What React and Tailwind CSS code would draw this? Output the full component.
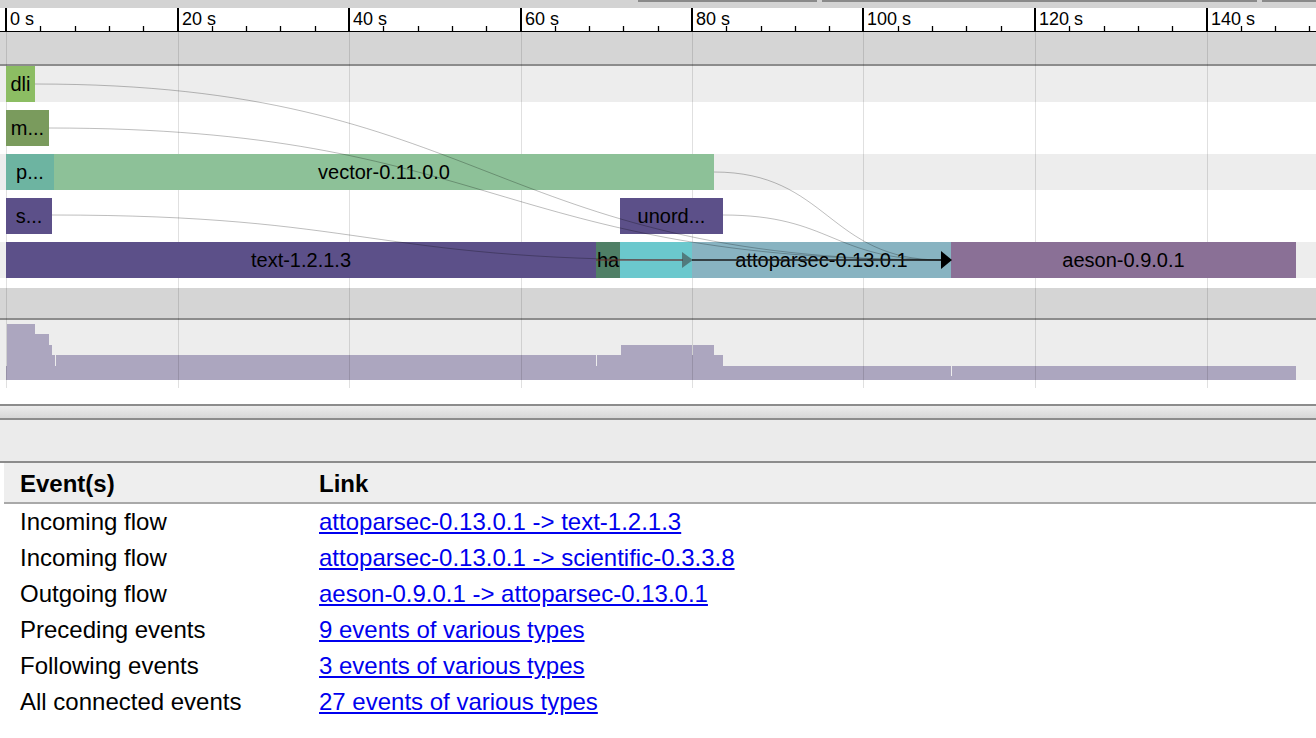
const PX_PER_S = 171.5 / 20;
const X0 = 6;

const majorTicks = [0, 20, 40, 60, 80, 100, 120, 140];

const rows = [
  { bg: true, bars: [{ from: 6, to: 35, color: 'bg-[#8cbd63]', label: 'dli' }] },
  { bg: false, bars: [{ from: 6, to: 49, color: 'bg-[#7a9b5d]', label: 'm...' }] },
  {
    bg: true,
    bars: [
      { from: 6, to: 54, color: 'bg-[#6db4a1]', label: 'p...' },
      { from: 54, to: 714, color: 'bg-[#8dc198]', label: 'vector-0.11.0.0' },
    ],
  },
  {
    bg: false,
    bars: [
      { from: 6, to: 52, color: 'bg-[#5c5089]', label: 's...' },
      { from: 620, to: 723, color: 'bg-[#5c5089]', label: 'unord...' },
    ],
  },
  {
    bg: true,
    bars: [
      { from: 6, to: 596, color: 'bg-[#5c5089]', label: 'text-1.2.1.3' },
      { from: 596, to: 620, color: 'bg-[#4f7f66]', label: 'ha' },
      { from: 620, to: 692, color: 'bg-[#6bc8cd]', label: '' },
      { from: 692, to: 951, color: 'bg-[#88b3c1]', label: 'attoparsec-0.13.0.1' },
      { from: 951, to: 1296, color: 'bg-[#8a7096]', label: 'aeson-0.9.0.1' },
    ],
  },
];

const events = [
  ['Incoming flow', 'attoparsec-0.13.0.1 -> text-1.2.1.3'],
  ['Incoming flow', 'attoparsec-0.13.0.1 -> scientific-0.3.3.8'],
  ['Outgoing flow', 'aeson-0.9.0.1 -> attoparsec-0.13.0.1'],
  ['Preceding events', '9 events of various types'],
  ['Following events', '3 events of various types'],
  ['All connected events', '27 events of various types'],
];

function Ruler() {
  const minor = [];
  for (let s = 0; s <= 152; s += 4) {
    if (s % 20 !== 0) minor.push(X0 + s * PX_PER_S);
  }
  return (
    <svg width="1316" height="24" className="block">
      <rect x="0" y="0" width="1316" height="24" fill="#ffffff" />
      <line x1="0" y1="23.5" x2="1316" y2="23.5" stroke="#000" strokeWidth="1" />
      {minor.map((x) => (
        <line key={x} x1={Math.round(x) + 0.5} y1="18" x2={Math.round(x) + 0.5} y2="24" stroke="#000" strokeWidth="1.3" />
      ))}
      {majorTicks.map((s) => {
        const x = Math.round(X0 + s * PX_PER_S);
        return (
          <g key={s}>
            <rect x={x - 1} y="0" width="2" height="24" fill="#000" />
            <text x={x + 4} y="17" fontSize="18" fill="#000" fontFamily="'Liberation Sans', Arial, sans-serif">
              {s} s
            </text>
          </g>
        );
      })}
    </svg>
  );
}

function Histogram() {
  return (
    <svg width="1316" height="60" viewBox="0 320 1316 60" className="block">
      <path
        d="M6,380 V366 H7 V324 H35 V334 H49 V345 H52 V355 H55 V366 H56 V355 H596 V366 H597 V355 H621 V345 H692 V355 H693 V345 H714 V355 H723 V366 H951 V376 H952 V366 H1296 V380 Z"
        fill="#aca6bf"
      />
    </svg>
  );
}

function Grid() {
  const grid = majorTicks.map((s) => Math.round(X0 + s * PX_PER_S) + 0.5);
  return (
    <svg width="1316" height="356" viewBox="0 32 1316 356" className="pointer-events-none absolute left-0 top-0">
      {grid.map((x) => (
        <line key={x} x1={x} y1="32" x2={x} y2="388" stroke="rgba(0,0,0,0.12)" strokeWidth="1" />
      ))}
    </svg>
  );
}

function Flows() {
  const line = 'rgba(0,0,0,0.26)';
  return (
    <svg width="1316" height="356" viewBox="0 32 1316 356" className="pointer-events-none absolute left-0 top-0">
      <path d="M35,84 C488,84 488,260 941,260" fill="none" stroke={line} />
      <path d="M49,128 C495,128 495,260 941,260" fill="none" stroke={line} />
      <path d="M52,215 C367,215 367,260 682,260" fill="none" stroke={line} />
      <path d="M714,172 C828,172 828,260 941,260" fill="none" stroke={line} />
      <path d="M723,215 C832,215 832,260 941,260" fill="none" stroke={line} />
      <line x1="596" y1="260" x2="683" y2="260" stroke="rgba(110,40,40,0.7)" strokeWidth="1.3" />
      <polygon points="682,252 693,260 682,268" fill="rgba(60,60,60,0.55)" />
      <line x1="692" y1="260" x2="942" y2="260" stroke="#1a1a1a" strokeWidth="1.4" />
      <polygon points="941,251 952,260 941,269" fill="#000" />
    </svg>
  );
}

export default function App() {
  return (
    <div className="h-[738px] w-[1316px] overflow-hidden bg-white font-['Liberation_Sans',Arial,sans-serif] text-black">
      <div className="h-2 bg-[#d3d3d3]">
        <div className="flex h-[2px] pl-[638px]">
          <div className="w-[179px] bg-[#8a8a8a]" />
          <div className="ml-[5px] w-[435px] bg-[#8a8a8a]" />
          <div className="ml-[5px] w-[54px] bg-[#8a8a8a]" />
        </div>
      </div>

      <Ruler />

      <div className="relative">
        <div className="h-8 bg-[#d5d5d5]" />
        <div className="h-[2px] bg-[#8c8c8c]" />

        <div className="flex flex-col gap-2 pb-[10px]">
          {rows.map((row, i) => (
            <div key={i} className={`relative h-9 ${row.bg ? 'bg-[#ededed]' : 'bg-white'}`}>
              {row.bars.map((bar) => (
                <div
                  key={bar.from}
                  className={`absolute top-0 z-10 flex h-9 items-center justify-center overflow-hidden whitespace-nowrap text-[20px] leading-none ${bar.color}`}
                  style={{ left: bar.from, width: bar.to - bar.from }}
                >
                  {bar.label}
                </div>
              ))}
            </div>
          ))}
        </div>

        <div className="h-[30px] bg-[#d5d5d5]" />
        <div className="h-[2px] bg-[#8c8c8c]" />
        <div className="bg-[#ededed]">
          <Histogram />
        </div>
        <div className="h-6 bg-white" />

        <Grid />
        <div className="absolute inset-0 z-20">
          <Flows />
        </div>
      </div>

      <div className="h-[2px] bg-[#8c8c8c]" />
      <div className="h-3 bg-linear-to-b from-[#ececec] to-[#d7d7d7]" />
      <div className="h-[2px] bg-[#8c8c8c]" />
      <div className="h-[41px] bg-[#ebebeb]" />
      <div className="h-[2px] bg-[#8c8c8c]" />

      <div className="ml-1 text-[24px] leading-none">
        <div className="flex h-[41px] items-center border-b-2 border-[#a9a9a9] bg-[#eeeeee] pt-[3px] font-bold">
          <div className="w-[299px] pl-4">Event(s)</div>
          <div className="pl-4">Link</div>
        </div>
        {events.map(([name, link], i) => (
          <div key={i} className="flex h-9 items-center">
            <div className="w-[299px] pl-4">{name}</div>
            <div className="pl-4">
              <a href="#" className="text-[#0000ee] underline">
                {link}
              </a>
            </div>
          </div>
        ))}
      </div>
    </div>
  );
}
